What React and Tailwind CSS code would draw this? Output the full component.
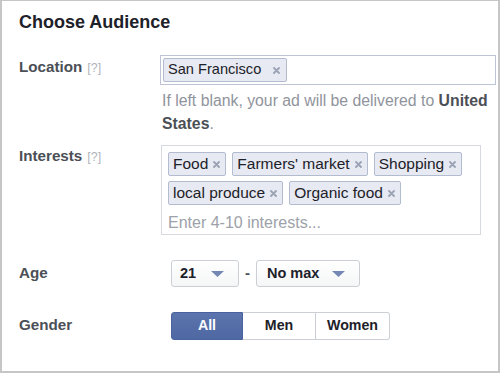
import React from "react";

const font = { fontFamily: '"Liberation Sans", Arial, sans-serif' };

function XIcon() {
  return (
    <svg width="7" height="7" viewBox="0 0 7 7" className="shrink-0">
      <path d="M1 1 L6 6 M6 1 L1 6" stroke="#9aa2b4" strokeWidth="1.8" strokeLinecap="round" />
    </svg>
  );
}

function Token({ label, size = "text-[15.5px]", gap = "gap-[5px]", pr = "pr-[5px]" }) {
  return (
    <span className={`flex h-[24px] items-center ${gap} ${pr} ${size} rounded-[2px] border border-[#b3bbce] bg-[#e7eaf2] pl-[4px] text-[#1d2129]`}>
      {label}
      <XIcon />
    </span>
  );
}

function Caret() {
  return (
    <svg width="13" height="6" viewBox="0 0 13 6">
      <path d="M0 0 H13 L6.5 6 Z" fill="#7488b3" />
    </svg>
  );
}

function Label({ text, help }) {
  return (
    <div className="w-[142px] shrink-0 text-[15.2px] font-bold leading-[18px] text-[#4b4f56]">
      {text}
      {help && <span className="ml-[5px] text-[12.5px] font-normal text-[#b0b4bb]">[?]</span>}
    </div>
  );
}

export default function App() {
  const interests = [["Food", "Farmers' market", "Shopping"], ["local produce", "Organic food"]];

  return (
    <div style={font} className="box-border h-[373px] w-[500px] border-x-2 border-b-2 border-t border-[#c6c6c6] bg-white pl-[17px] pt-[11px]">
      <h1 className="text-[18px] font-bold leading-[20px] text-[#1d2129]">Choose Audience</h1>

      <div className="mt-[23px] flex">
        <div className="pt-[3px]">
          <Label text="Location" help />
        </div>
        <div className="-ml-[1px]">
          <div className="box-border h-[30px] w-[336px] border border-[#bdc4d4] p-[2px]">
            <div className="flex">
              <Token label="San Francisco" size="text-[14.6px]" gap="gap-[12px]" pr="pr-[6px]" />
            </div>
          </div>
          <p className="mt-[4px] w-[335px] pl-[2px] text-[15.8px] leading-[23px] text-[#90949c]">
            If left blank, your ad will be delivered to <b className="text-[#4b4f56]">United States</b>.
          </p>
        </div>
      </div>

      <div className="mt-[10px] flex">
        <div className="pt-[2px]">
          <Label text="Interests" help />
        </div>
        <div className="box-border w-[320px] border border-[#d6d9df] pb-[1px] pl-[6px] pt-[6px]">
          <div className="flex flex-col gap-[5px]">
            {interests.map((row, i) => (
              <div key={i} className="flex gap-[6px]">
                {row.map((t) => (
                  <Token key={t} label={t} />
                ))}
              </div>
            ))}
          </div>
          <div className="mt-[8px] text-[16px] leading-[20px] text-[#9da1a9]">Enter 4-10 interests...</div>
        </div>
      </div>

      <div className="mt-[25px] flex">
        <div className="pt-[4px]">
          <Label text="Age" />
        </div>
        <div className="ml-[10px] flex items-center">
          <div className="box-border flex h-[27px] w-[68px] items-center gap-[15px] rounded-[3px] border border-[#ccd0d5] bg-gradient-to-b from-white to-[#f5f6f7] pl-[8px] text-[14.5px] font-bold text-[#1d2129]">
            21
            <Caret />
          </div>
          <span className="mx-[6px] text-[15px] font-bold text-[#4b4f56]">-</span>
          <div className="box-border flex h-[27px] w-[104px] items-center gap-[13px] rounded-[3px] border border-[#ccd0d5] bg-gradient-to-b from-white to-[#f5f6f7] pl-[10px] text-[14.5px] font-bold text-[#1d2129]">
            No max
            <Caret />
          </div>
        </div>
      </div>

      <div className="mt-[25px] flex">
        <div className="pt-[4px]">
          <Label text="Gender" />
        </div>
        <div className="ml-[10px] flex h-[28px] text-[14.2px] font-bold">
          <div className="flex w-[72px] items-center justify-center rounded-l-[3px] border border-[#4a63a0] bg-gradient-to-b from-[#5b74ad] to-[#4e68a3] text-white">
            All
          </div>
          <div className="flex w-[73px] items-center justify-center border-y border-r border-[#ccd0d5] bg-white text-[#1d2129]">
            Men
          </div>
          <div className="flex w-[74px] items-center justify-center rounded-r-[3px] border-y border-r border-[#ccd0d5] bg-white text-[#1d2129]">
            Women
          </div>
        </div>
      </div>
    </div>
  );
}
